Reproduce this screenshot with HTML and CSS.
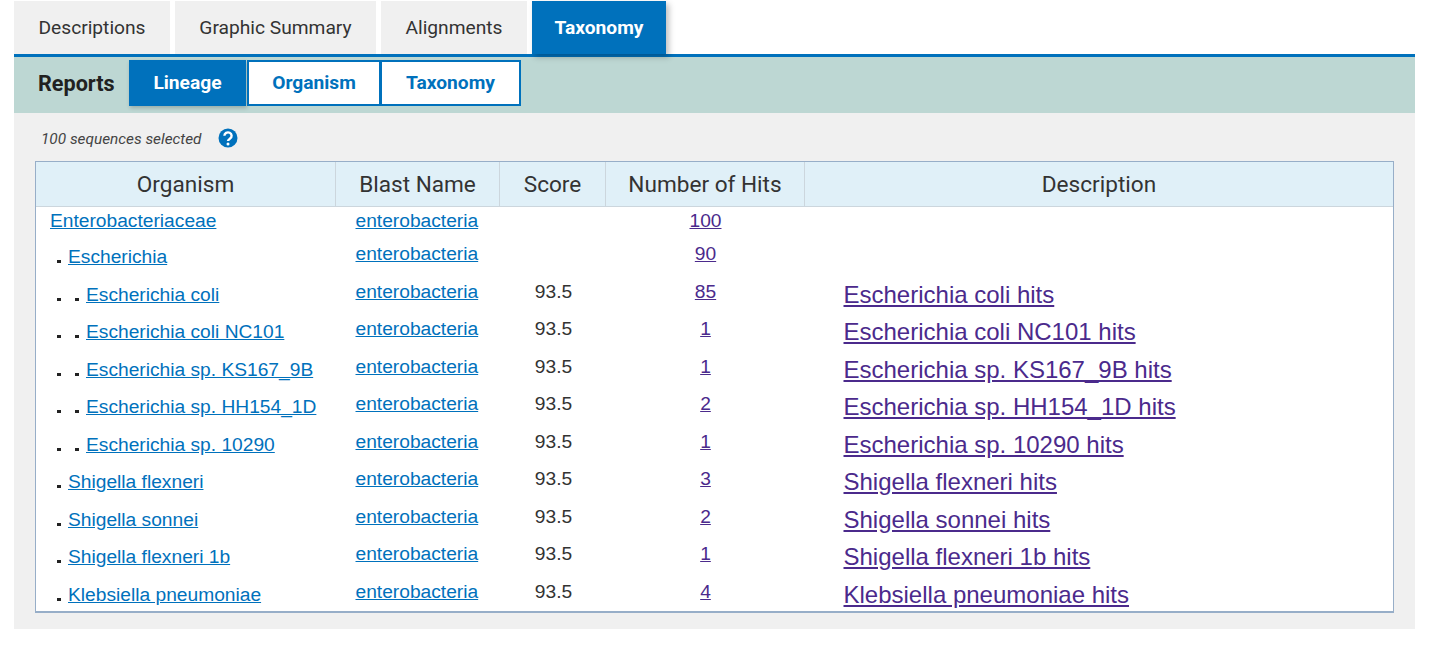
FILE: index.html
```html
<!DOCTYPE html>
<html lang="en">
<head>
    <meta charset="UTF-8">
    <title>Taxonomy</title>
    <link rel="stylesheet" href="styles.css">
</head>
<body>
    <div id="layout">
        <ul class="tabs">
            <li class="tab tab1"><a href="#">Descriptions</a></li>
            <li class="tab tab2"><a href="#">Graphic Summary</a></li>
            <li class="tab tab3"><a href="#">Alignments</a></li>
            <li class="tab tab4 on"><a href="#">Taxonomy</a></li>
        </ul>
        <div class="reports">
            <h3>Reports</h3>
            <a class="rbtn lineage on" href="#">Lineage</a>
            <a class="rbtn organism" href="#">Organism</a>
            <a class="rbtn taxonomy" href="#">Taxonomy</a>
        </div>
        <div class="panel">
            <p class="selected">
                <span>100 sequences selected</span>
                <svg class="help" width="20" height="20" viewBox="0 0 20 20">
                    <circle cx="10" cy="10" r="9.5" fill="#0071bc"/>
                    <path d="M6.4 7.8a3.6 3.4 0 1 1 5.6 2.8c-1.2.8-2 1.3-2 2.5" fill="none" stroke="#fff" stroke-width="2.4"/>
                    <circle cx="10" cy="16" r="1.5" fill="#fff"/>
                </svg>
            </p>
            <table class="tax">
                <thead>
                    <tr>
                        <th class="c1">Organism</th>
                        <th class="c2">Blast Name</th>
                        <th class="c3">Score</th>
                        <th class="c4">Number of Hits</th>
                        <th class="c5">Description</th>
                    </tr>
                </thead>
                <tbody>
                    <tr class="first">
                        <td class="org"><a href="#">Enterobacteriaceae</a></td>
                        <td class="blast"><a href="#">enterobacteria</a></td>
                        <td class="score"></td>
                        <td class="hits"><a href="#">100</a></td>
                        <td class="desc"></td>
                    </tr>
                    <tr>
                        <td class="org l1"><i></i><a href="#">Escherichia</a></td>
                        <td class="blast"><a href="#">enterobacteria</a></td>
                        <td class="score"></td>
                        <td class="hits"><a href="#">90</a></td>
                        <td class="desc"></td>
                    </tr>
                    <tr>
                        <td class="org l2"><i></i><i></i><a href="#">Escherichia coli</a></td>
                        <td class="blast"><a href="#">enterobacteria</a></td>
                        <td class="score">93.5</td>
                        <td class="hits"><a href="#">85</a></td>
                        <td class="desc"><a href="#">Escherichia coli hits</a></td>
                    </tr>
                    <tr>
                        <td class="org l2"><i></i><i></i><a href="#">Escherichia coli NC101</a></td>
                        <td class="blast"><a href="#">enterobacteria</a></td>
                        <td class="score">93.5</td>
                        <td class="hits"><a href="#">1</a></td>
                        <td class="desc"><a href="#">Escherichia coli NC101 hits</a></td>
                    </tr>
                    <tr>
                        <td class="org l2"><i></i><i></i><a href="#">Escherichia sp. KS167_9B</a></td>
                        <td class="blast"><a href="#">enterobacteria</a></td>
                        <td class="score">93.5</td>
                        <td class="hits"><a href="#">1</a></td>
                        <td class="desc"><a href="#">Escherichia sp. KS167_9B hits</a></td>
                    </tr>
                    <tr>
                        <td class="org l2"><i></i><i></i><a href="#">Escherichia sp. HH154_1D</a></td>
                        <td class="blast"><a href="#">enterobacteria</a></td>
                        <td class="score">93.5</td>
                        <td class="hits"><a href="#">2</a></td>
                        <td class="desc"><a href="#">Escherichia sp. HH154_1D hits</a></td>
                    </tr>
                    <tr>
                        <td class="org l2"><i></i><i></i><a href="#">Escherichia sp. 10290</a></td>
                        <td class="blast"><a href="#">enterobacteria</a></td>
                        <td class="score">93.5</td>
                        <td class="hits"><a href="#">1</a></td>
                        <td class="desc"><a href="#">Escherichia sp. 10290 hits</a></td>
                    </tr>
                    <tr>
                        <td class="org l1"><i></i><a href="#">Shigella flexneri</a></td>
                        <td class="blast"><a href="#">enterobacteria</a></td>
                        <td class="score">93.5</td>
                        <td class="hits"><a href="#">3</a></td>
                        <td class="desc"><a href="#">Shigella flexneri hits</a></td>
                    </tr>
                    <tr>
                        <td class="org l1"><i></i><a href="#">Shigella sonnei</a></td>
                        <td class="blast"><a href="#">enterobacteria</a></td>
                        <td class="score">93.5</td>
                        <td class="hits"><a href="#">2</a></td>
                        <td class="desc"><a href="#">Shigella sonnei hits</a></td>
                    </tr>
                    <tr>
                        <td class="org l1"><i></i><a href="#">Shigella flexneri 1b</a></td>
                        <td class="blast"><a href="#">enterobacteria</a></td>
                        <td class="score">93.5</td>
                        <td class="hits"><a href="#">1</a></td>
                        <td class="desc"><a href="#">Shigella flexneri 1b hits</a></td>
                    </tr>
                    <tr class="last">
                        <td class="org l1"><i></i><a href="#">Klebsiella pneumoniae</a></td>
                        <td class="blast"><a href="#">enterobacteria</a></td>
                        <td class="score">93.5</td>
                        <td class="hits"><a href="#">4</a></td>
                        <td class="desc"><a href="#">Klebsiella pneumoniae hits</a></td>
                    </tr>
                </tbody>
            </table>
        </div>
    </div>
</body>
</html>
```
FILE: styles.css
```css
* {box-sizing: border-box;}
body {
    margin: 0;
    background-color: #fff;
    font-family: "Liberation Sans", Arial, sans-serif;
    color: #333;
}
#layout {
    width: 1401px;
    margin: 1px 0 0 14px;
}

/*tabs*/
.tabs {
    display: flex;
    gap: 5px;
    list-style: none;
    margin: 0;
    padding: 0;
    height: 53px;
}
.tab a {
    display: block;
    height: 53px;
    text-align: center;
    background-color: #f0f0f0;
    color: #333;
    font: 19.2px/53px Roboto, sans-serif;
    text-decoration: none;
}
.tab1 {width: 156px;}
.tab2 {width: 201px;}
.tab3 {width: 146px;}
.tab4 {width: 134px;}
.tab.on a {
    background-color: #0071bc;
    color: #fff;
    font-weight: 700;
    box-shadow: 3px 3px 6px rgba(0,0,0,.25);
}

/*reports bar*/
.reports {
    display: flex;
    align-items: flex-start;
    height: 59px;
    padding: 3px 0 0 24px;
    border-top: 3px solid #0071bc;
    background-color: #bdd7d3;
}
.reports h3 {
    width: 91px;
    margin: 0;
    font: 700 21.6px/48px Roboto, sans-serif;
    color: #212121;
}
.rbtn {
    display: block;
    height: 46px;
    border: 2px solid #0071bc;
    background-color: #fff;
    color: #0071bc;
    font: 700 19.2px/41px Roboto, sans-serif;
    text-align: center;
    text-decoration: none;
}
.rbtn.on {
    background-color: #0071bc;
    color: #fff;
    box-shadow: 1px 2px 4px rgba(0,0,0,.2);
}
.lineage {width: 117px;}
.organism {width: 134px; margin-left: 1px;}
.taxonomy {width: 141px; margin-left: -1px;}

/*panel*/
.panel {
    height: 516px;
    padding: 14px 21px 0 21px;
    background-color: #f0f0f0;
}
.selected {
    display: flex;
    align-items: center;
    height: 22px;
    margin: 0 0 12px 0;
    padding-left: 6px;
    font: italic 15.36px Roboto, sans-serif;
    color: #444;
}
.selected span {padding-top: 2px;}
.help {margin-left: 16px;}

/*table*/
.tax {
    width: 1359px;
    table-layout: fixed;
    border-collapse: separate;
    border-spacing: 0;
    border: 1px solid #97aec8;
    border-bottom-width: 2px;
    background-color: #fff;
}
.tax th {
    height: 45px;
    padding: 0;
    background-color: #e0f0f8;
    border-left: 1px solid #ccd6dd;
    border-bottom: 1px solid #ccd6dd;
    font: 400 22.6px Roboto, sans-serif;
    color: #333;
}
.tax th.c1 {border-left: 0;}
.c1 {width: 299px;}
.c2 {width: 164px;}
.c3 {width: 106px;}
.c4 {width: 199px;}
.c5 {width: 589px;}
.tax td {
    height: 37.5px;
    padding: 8px 0 0 0;
    vertical-align: top;
    font-size: 19.2px;
}
.tax tr.first td {height: 28px; padding-top: 3px;}
.tax tr.last td {height: 38.5px;}
.tax a {color: #0071bc;}
.tax td.org {padding-left: 14px; padding-top: 11px;}
.tax tr.first td.org {padding-top: 3px;}
.tax td.l1, .tax td.l2 {padding-left: 21px;}
.org i {
    display: inline-block;
    width: 4px;
    height: 3px;
    margin-right: 7px;
    background-color: #222;
}
.org.l2 i:first-child {margin-right: 14px;}
.tax td.blast {padding-left: 20.5px;}
.tax td.score {text-align: center; padding-left: 3px;}
.tax td.hits {text-align: center; padding-left: 2px;}
.tax .hits a, .tax .desc a {color: #4b2a8c;}
.tax td.desc {padding-left: 39.5px; padding-top: 8.25px; font-size: 24px;}
```
